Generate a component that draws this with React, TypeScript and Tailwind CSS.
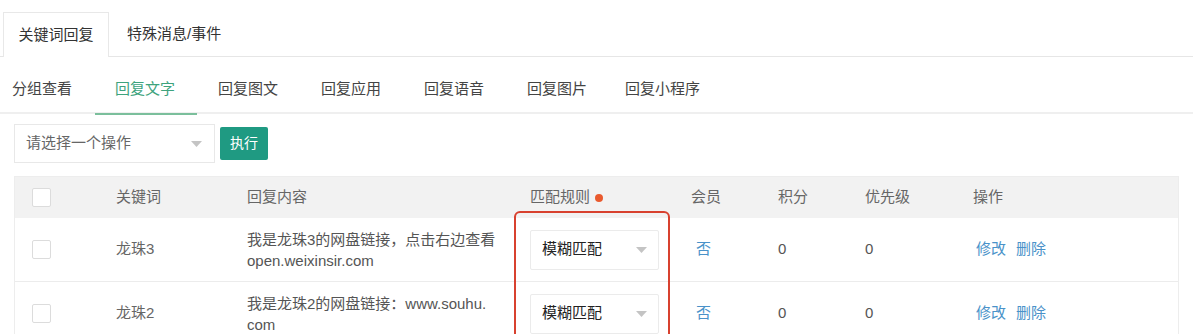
const SUB_TABS = ['分组查看', '回复文字', '回复图文', '回复应用', '回复语音', '回复图片', '回复小程序'];

const ROWS = [
  { id: 1, keyword: '龙珠3', lines: ['我是龙珠3的网盘链接，点击右边查看', 'open.weixinsir.com'] },
  { id: 2, keyword: '龙珠2', lines: ['我是龙珠2的网盘链接：www.souhu.', 'com'] },
];

const COLS = 'grid grid-cols-[101px_131px_283px_161px_87px_87px_108px_1fr]';

const Caret = () => (
  <svg width="11" height="6" viewBox="0 0 11 6" className="shrink-0">
    <path d="M0 0h11L5.5 6z" fill="#c4c4c4" />
  </svg>
);

const Checkbox = () => <span className="ml-[17px] block h-[19px] w-[19px] rounded-[2px] border border-[#dcdcdc] bg-white" />;

export default function App() {
  return (
    <div className="h-[334px] w-[1193px] overflow-hidden bg-white text-[15px] text-[#555] [font-family:'Liberation_Sans','Noto_Sans_CJK_SC',sans-serif]">
      {/* top tabs */}
      <div className="flex h-[57px] items-end border-b border-[#e6e6e6] pl-[3px]">
        <div className="-mb-px flex h-[45px] w-[106px] items-center justify-center border border-b-0 border-[#e8e8e8] bg-white text-[#333]">
          关键词回复
        </div>
        <div className="flex h-[44px] items-center pl-[18px] text-[#333]">特殊消息/事件</div>
      </div>

      {/* sub tabs */}
      <div className="flex h-[57px] items-center gap-[43px] border-b-2 border-[#efefef] pl-[12px] pt-[10px]">
        {SUB_TABS.map((t) => (
          <span
            key={t}
            className={`relative ${t === '回复文字' ? 'text-[#3ea37d]' : 'text-[#444]'} ${t === '回复小程序' ? '-ml-[5px]' : ''}`}
          >
            {t}
            {t === '回复文字' && <span className="absolute -bottom-[14px] -left-[20px] -right-[22px] h-[2px] bg-[#7bbf9c]" />}
          </span>
        ))}
      </div>

      {/* toolbar */}
      <div className="flex items-center gap-[5px] pl-[14px] pt-[10px]">
        <div className="flex h-[39px] w-[201px] items-center justify-between border border-[#e8e8e8] pl-[11px] pr-[12px] text-[#666]">
          <span>请选择一个操作</span>
          <Caret />
        </div>
        <button className="h-[33px] w-[48px] rounded-[2px] bg-[#1f9a82] text-[14px] text-white">执行</button>
      </div>

      {/* table */}
      <div className="relative mx-[14px] mt-[13px] border-x border-[#ededed]">
        <div className={`${COLS} h-[42px] items-center border-t border-[#ededed] bg-[#f2f2f2] text-[#666]`}>
          <div>
            <Checkbox />
          </div>
          <div>关键词</div>
          <div>回复内容</div>
          <div className="flex items-center gap-[5px]">
            匹配规则
            <span className="h-[8px] w-[8px] rounded-full bg-[#e95a2e]" />
          </div>
          <div>会员</div>
          <div>积分</div>
          <div>优先级</div>
          <div>操作</div>
        </div>

        {ROWS.map((r) => (
          <div key={r.id} className={`${COLS} h-[64px] items-center border-b border-[#ececec]`}>
            <div>
              <Checkbox />
            </div>
            <div className="text-[#666]">{r.keyword}</div>
            <div className="leading-[21px]">
              {r.lines.map((l) => (
                <div key={l}>{l}</div>
              ))}
            </div>
            <div>
              <div className="flex h-[40px] w-[129px] items-center justify-between rounded-[2px] border border-[#ebebeb] pl-[11px] pr-[11px] text-[#222]">
                <span>模糊匹配</span>
                <Caret />
              </div>
            </div>
            <div className="pl-[5px] text-[#4a92c9]">否</div>
            <div>0</div>
            <div>0</div>
            <div className="flex gap-[10px] pl-[3px] text-[#4a92c9]">
              <span>修改</span>
              <span>删除</span>
            </div>
          </div>
        ))}

        {/* annotation box */}
        <div className="absolute left-[499px] top-[35px] h-[160px] w-[156px] rounded-[6px] border-2 border-[#d8412f]" />
      </div>
    </div>
  );
}
